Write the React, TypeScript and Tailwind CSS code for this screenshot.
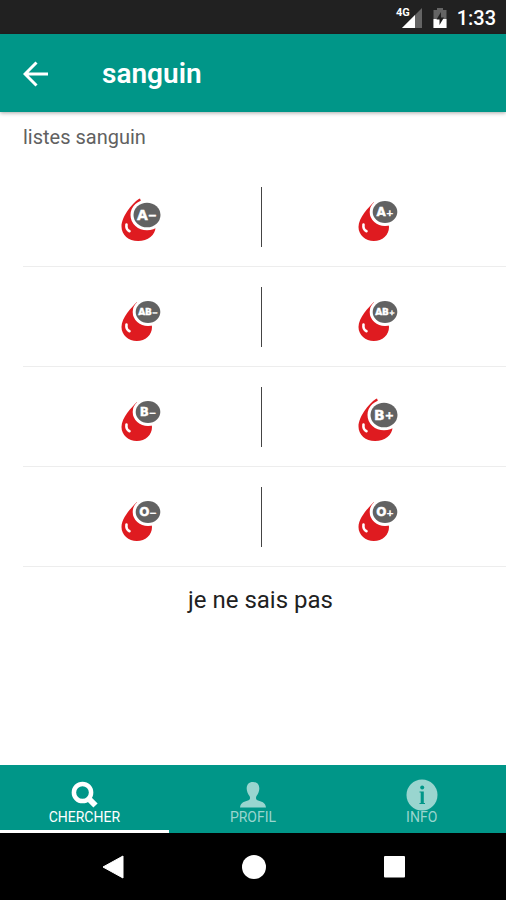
import { ReactNode } from 'react';

interface BloodType {
  group: string;
  sign: string;
  large?: boolean;
}

const rows: [BloodType, BloodType][] = [
  [{ group: 'A', sign: '−', large: true }, { group: 'A', sign: '+' }],
  [{ group: 'AB', sign: '−' }, { group: 'AB', sign: '+' }],
  [{ group: 'B', sign: '−' }, { group: 'B', sign: '+', large: true }],
  [{ group: 'O', sign: '−' }, { group: 'O', sign: '+' }],
];

function BloodDrop({ group, sign, large }: BloodType) {
  const badge = large
    ? { cx: 27, cy: 22, rx: 13.5, ry: 12.3 }
    : { cx: 28, cy: 19, rx: 12.3, ry: 11 };
  const wide = group.length > 1;

  return (
    <svg viewBox="0 0 44 48" className="h-12 w-11" aria-hidden="true">
      <path
        d={
          large
            ? 'M20 5.5C14 8 1.5 23 1.5 33.5C1.5 42 8.5 48 18 48C28 48 35.5 42 35.5 34C35.5 24 24 18 20 5.5Z'
            : 'M17 9C12 14 1.5 24.5 1.5 34C1.5 42 8.5 48 16.8 48C25.5 48 32 42 32 34C32 25 21 18 17 9Z'
        }
        fill="#df1b20"
      />
      <path d="M6.5 31.5C6 35 7.2 37.2 9.5 38.2" fill="none" stroke="#fff" strokeWidth="2.6" strokeLinecap="round" />
      <ellipse {...badge} fill="#626262" stroke="#fff" strokeWidth="6" paintOrder="stroke" />
      <text
        x={badge.cx}
        y={badge.cy + (wide ? 3.2 : large ? 5 : 4.2)}
        textAnchor="middle"
        fill="#fff"
        stroke="#fff"
        strokeWidth="0.4"
        fontFamily="'DejaVu Sans', sans-serif"
        fontWeight="700"
        fontSize={wide ? 9 : large ? 14 : 12}
      >
        {group}
        <tspan fontSize={wide ? 7 : large ? 11 : 9} dy={wide ? 0 : -0.7}>{sign}</tspan>
      </text>
    </svg>
  );
}

function StatusBar() {
  return (
    <div className="flex h-[34px] items-center justify-end bg-[#212121] pt-[2px] pr-[10px] text-white">
      <svg viewBox="0 0 28 24" className="h-6 w-7" aria-hidden="true">
        <path d="M27 2V22H7Z" fill="#646464" />
        <path d="M20 9V22H7Z" fill="#fff" />
        <rect width="14" height="10" fill="#212121" />
        <text x="1" y="10" fill="#fff" fontFamily="Roboto, sans-serif" fontWeight="700" fontSize="11">4G</text>
      </svg>
      <svg viewBox="0 0 16 24" className="ml-[9px] h-6 w-4" aria-hidden="true">
        <path d="M5 2H11V4H14.5V22H1.5V4H5Z" fill="#646464" />
        <path d="M1.5 13H14.5V22H1.5Z" fill="#fff" />
        <path d="M9 6L4.5 13.5H7.5V19L12 11.5H9Z" fill="#212121" />
      </svg>
      <span className="ml-[9px] text-[20px] leading-6 font-medium">1:33</span>
    </div>
  );
}

function Tab({ label, active, children }: { label: string; active?: boolean; children: ReactNode }) {
  return (
    <button
      role="tab"
      aria-selected={!!active}
      className={
        active
          ? 'flex flex-1 flex-col items-center border-b-[3px] border-white pt-[14px] text-white'
          : 'flex flex-1 flex-col items-center border-b-[3px] border-transparent pt-[14px] text-[#99d5cf]'
      }
    >
      <svg viewBox="0 0 32 32" className="h-8 w-8" aria-hidden="true">
        {children}
      </svg>
      <span className="-mt-[2px] text-[14px] leading-4">{label}</span>
    </button>
  );
}

export default function App() {
  return (
    <div className="flex min-h-screen flex-col bg-white font-['Roboto',sans-serif]">
      <StatusBar />

      <header className="z-10 flex h-[78px] items-center bg-[#009688] pt-[2px] pl-[23px] text-white shadow-[0_1px_4px_rgba(0,0,0,0.35)]">
        <button aria-label="Retour">
          <svg viewBox="0 0 26 26" className="h-[26px] w-[26px]" fill="none" stroke="currentColor" strokeWidth="3">
            <path d="M13.5 1.5L2 13L13.5 24.5M2 13H25" />
          </svg>
        </button>
        <h1 className="ml-[53px] text-[28px] leading-8 font-semibold">sanguin</h1>
      </header>

      <main className="flex-1 pl-[23px]">
        <h2 className="h-[55px] pt-[13px] text-[20px] leading-6 text-[#616161]">listes sanguin</h2>

        {rows.map(([left, right]) => (
          <div
            key={left.group}
            className="grid h-[100px] grid-cols-[1fr_1px_1fr] items-center border-b border-[#ededed] pr-[6px]"
          >
            <button aria-label={left.group + left.sign} className="flex justify-center">
              <BloodDrop {...left} />
            </button>
            <div className="h-[60px] bg-[#444444]" />
            <button aria-label={right.group + right.sign} className="flex justify-center pr-1">
              <BloodDrop {...right} />
            </button>
          </div>
        ))}

        <button className="block w-full pt-[17px] pr-[8px] text-center text-[24px] leading-8 text-[#212121]">
          je ne sais pas
        </button>
      </main>

      <div role="tablist" className="flex h-[68px] bg-[#009688]">
        <Tab label="CHERCHER" active>
          <circle cx="14.5" cy="13.5" r="8.6" fill="none" stroke="currentColor" strokeWidth="4.5" />
          <path d="M19.5 18.5L27.5 26.5" stroke="currentColor" strokeWidth="6" />
        </Tab>
        <Tab label="PROFIL">
          <path
            d="M16 3C11.5 3 9.5 6 9.7 10C9.8 12.5 11 15 12.5 17C13.5 19 13 20.5 11.5 21.2C8 22.6 3.5 23 3 28.5H29C28.5 23 24 22.6 20.5 21.2C19 20.5 18.5 19 19.5 17C21 15 22.2 12.5 22.3 10C22.5 6 20.5 3 16 3Z"
            fill="currentColor"
          />
        </Tab>
        <Tab label="INFO">
          <circle cx="16" cy="16" r="15.5" fill="currentColor" />
          <circle cx="16.2" cy="8.5" r="2" fill="#009688" />
          <path d="M13.5 12.5H17.8V24H19V25H13.5V24H14.7V13.5H13.5Z" fill="#009688" />
        </Tab>
      </div>

      <nav className="flex h-[67px] items-center justify-center gap-[117px] bg-black pl-[1px] text-white">
        <button aria-label="Précédent">
          <svg viewBox="0 0 24 24" className="h-6 w-6">
            <path d="M2 12L22 1V23Z" fill="currentColor" stroke="currentColor" strokeLinejoin="round" />
          </svg>
        </button>
        <button aria-label="Accueil">
          <svg viewBox="0 0 24 24" className="h-6 w-6">
            <circle cx="12" cy="12" r="12" fill="currentColor" />
          </svg>
        </button>
        <button aria-label="Applications récentes">
          <svg viewBox="0 0 24 24" className="h-6 w-6">
            <rect x="1" y="1" width="21" height="21.5" rx="1" fill="currentColor" />
          </svg>
        </button>
      </nav>
    </div>
  );
}
